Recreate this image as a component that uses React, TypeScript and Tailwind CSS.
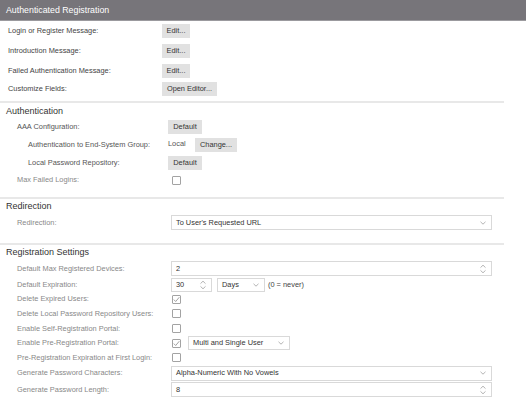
import React from 'react';

const Chevron = () => (
  <svg width="6" height="4" viewBox="0 0 6 4" className="shrink-0">
    <polyline points="0.5,0.8 3,3.2 5.5,0.8" fill="none" stroke="#a0a0a0" strokeWidth="0.8" />
  </svg>
);

const Spinner = () => (
  <svg width="6" height="10" viewBox="0 0 6 10" className="shrink-0">
    <polyline points="0.5,3.6 3,1.2 5.5,3.6" fill="none" stroke="#a0a0a0" strokeWidth="0.8" />
    <polyline points="0.5,6.4 3,8.8 5.5,6.4" fill="none" stroke="#a0a0a0" strokeWidth="0.8" />
  </svg>
);

const Btn: React.FC<{ className: string; children: React.ReactNode }> = ({ className, children }) => (
  <div className={`h-[14px] bg-[#e1e1e1] text-[#333] flex items-center justify-center ${className}`}>{children}</div>
);

const Check: React.FC<{ checked?: boolean }> = ({ checked }) => (
  <div className="w-[9px] h-[9px] border border-[#a3a3a3] rounded-[1px] bg-white flex items-center justify-center shrink-0">
    {checked && (
      <svg width="7" height="7" viewBox="0 0 7 7">
        <polyline points="0.8,3.6 2.7,5.5 6.3,1.2" fill="none" stroke="#8a8a8a" strokeWidth="0.8" />
      </svg>
    )}
  </div>
);

const Field: React.FC<{ className: string; value: string; spin?: boolean }> = ({ className, value, spin }) => (
  <div className={`border border-[#d9d9d9] bg-white flex items-center justify-between pl-[4px] pr-[5px] text-[#333] ${className}`}>
    <span>{value}</span>
    {spin ? <Spinner /> : <Chevron />}
  </div>
);

export default function App() {
  return (
    <div className="w-[526px] h-[416px] bg-white font-['Liberation_Sans',Arial,sans-serif] text-[7.4px] leading-none overflow-hidden">
      <div className="h-[21px] bg-[#77757a] border-b border-[#9b9a9e] flex items-center pl-[6px] text-white text-[8.8px]">
        Authenticated Registration
      </div>

      {/* messages */}
      <div className="text-[#444]">
        <div className="h-[20px] flex items-center">
          <div className="w-[162px] pl-[8px]">Login or Register Message:</div>
          <Btn className="w-[28px]">Edit...</Btn>
        </div>
        <div className="h-[20px] flex items-center">
          <div className="w-[162px] pl-[8px]">Introduction Message:</div>
          <Btn className="w-[28px]">Edit...</Btn>
        </div>
        <div className="h-[20px] flex items-center">
          <div className="w-[162px] pl-[8px]">Failed Authentication Message:</div>
          <Btn className="w-[28px]">Edit...</Btn>
        </div>
        <div className="h-[15px] flex items-center">
          <div className="w-[162px] pl-[8px]">Customize Fields:</div>
          <Btn className="w-[55px]">Open Editor...</Btn>
        </div>
      </div>
      <div className="mt-[5px] h-[2px] w-[504px] bg-[#e8e8e8]" />

      {/* authentication */}
      <div className="h-[16px] flex items-center pl-[6px] text-[9px] text-[#333]">Authentication</div>
      <div className="text-[#555]">
        <div className="h-[16px] flex items-center">
          <div className="w-[168px] pl-[17px]">AAA Configuration:</div>
          <Btn className="w-[34px]">Default</Btn>
        </div>
        <div className="h-[20px] flex items-center">
          <div className="w-[168px] pl-[28px]">Authentication to End-System Group:</div>
          <span className="w-[27px] -mt-[3px]">Local</span>
          <Btn className="w-[42px]">Change...</Btn>
        </div>
        <div className="h-[16px] flex items-center">
          <div className="w-[168px] pl-[28px]">Local Password Repository:</div>
          <Btn className="w-[34px]">Default</Btn>
        </div>
        <div className="h-[18px] flex items-center text-[#888]">
          <div className="w-[172px] pl-[17px]">Max Failed Logins:</div>
          <Check />
        </div>
      </div>
      <div className="mt-[8px] h-[2px] w-[504px] bg-[#e8e8e8]" />

      {/* redirection */}
      <div className="h-[14px] flex items-center pl-[6px] text-[9px] text-[#333]">Redirection</div>
      <div className="h-[19px] flex items-center text-[#888]">
        <div className="w-[171px] pl-[17px]">Redirection:</div>
        <Field className="w-[321px] h-[15px]" value="To User's Requested URL" />
      </div>
      <div className="mt-[11px] h-[2px] w-[504px] bg-[#e8e8e8]" />

      {/* registration */}
      <div className="h-[15px] flex items-center pl-[6px] text-[9px] text-[#333]">Registration Settings</div>
      <div className="text-[#888]">
        <div className="h-[17px] flex items-center">
          <div className="w-[171px] pl-[17px]">Default Max Registered Devices:</div>
          <Field className="w-[321px] h-[15px]" value="2" spin />
        </div>
        <div className="h-[15px] flex items-center">
          <div className="w-[171px] pl-[17px]">Default Expiration:</div>
          <Field className="w-[41px] h-[14px]" value="30" spin />
          <Field className="ml-[5px] w-[48px] h-[14px]" value="Days" />
          <span className="ml-[3px] text-[#444]">(0 = never)</span>
        </div>
        <div className="h-[14px] flex items-center">
          <div className="w-[172px] pl-[17px]">Delete Expired Users:</div>
          <Check checked />
        </div>
        <div className="h-[15px] flex items-center">
          <div className="w-[172px] pl-[17px]">Delete Local Password Repository Users:</div>
          <Check />
        </div>
        <div className="h-[15px] flex items-center">
          <div className="w-[172px] pl-[17px]">Enable Self-Registration Portal:</div>
          <Check />
        </div>
        <div className="h-[14px] flex items-center">
          <div className="w-[172px] pl-[17px]">Enable Pre-Registration Portal:</div>
          <Check checked />
          <Field className="ml-[7px] w-[102px] h-[14px]" value="Multi and Single User" />
        </div>
        <div className="h-[15px] flex items-center">
          <div className="w-[172px] pl-[17px]">Pre-Registration Expiration at First Login:</div>
          <Check />
        </div>
        <div className="h-[16px] flex items-center">
          <div className="w-[171px] pl-[17px]">Generate Password Characters:</div>
          <Field className="w-[321px] h-[15px]" value="Alpha-Numeric With No Vowels" />
        </div>
        <div className="h-[17px] flex items-center">
          <div className="w-[171px] pl-[17px]">Generate Password Length:</div>
          <Field className="w-[321px] h-[15px]" value="8" spin />
        </div>
      </div>
    </div>
  );
}
